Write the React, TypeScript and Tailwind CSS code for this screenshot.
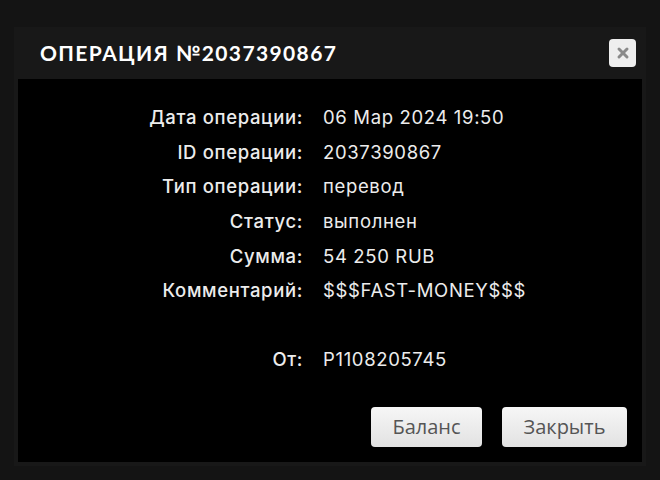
import { X } from 'lucide-react';

const rows = [
  { label: 'Дата операции:', value: '06 Мар 2024 19:50' },
  { label: 'ID операции:', value: '2037390867' },
  { label: 'Тип операции:', value: 'перевод' },
  { label: 'Статус:', value: 'выполнен' },
  { label: 'Сумма:', value: '54 250 RUB' },
  { label: 'Комментарий:', value: '$$$FAST-MONEY$$$' },
];

export default function App() {
  return (
    <div className="w-[660px] h-[480px] bg-[#141414] pt-[27px] px-[14px] overflow-hidden">
      <div className="bg-[#181818] px-1 pb-1">
        <div className="h-[52px] flex items-center justify-between pl-[22px] pr-[6px]">
          <h1
            className="text-white font-bold text-[21px] tracking-[0.065em]"
            style={{ fontFamily: 'Lato, "Noto Sans", sans-serif' }}
          >
            ОПЕРАЦИЯ №2037390867
          </h1>
          <button className="w-[27px] h-[28px] rounded bg-[#eeeeee] flex items-center justify-center">
            <X size={16} strokeWidth={4.5} className="text-[#8a8a8a]" />
          </button>
        </div>

        <div
          className="bg-black pt-[21px] pb-[15px] pr-[15px] text-[#ececec] text-[18.5px] tracking-[0.035em]"
          style={{ fontFamily: 'Inter, "Noto Sans", sans-serif' }}
        >
          <div className="grid grid-cols-[285px_1fr] gap-x-5">
            {rows.map((r) => (
              <div key={r.label} className="contents">
                <div className="text-right h-[34.7px] leading-[34.7px] font-medium">{r.label}</div>
                <div className="h-[34.7px] leading-[34.7px]">{r.value}</div>
              </div>
            ))}
            <div className="h-[34px]" />
            <div className="h-[34px]" />
            <div className="text-right h-[34px] leading-[34px] font-medium">От:</div>
            <div className="h-[34px] leading-[34px]">P1108205745</div>
          </div>

          <div
            className="flex justify-end gap-5 mt-[31px] tracking-normal"
            style={{ fontFamily: '"Open Sans", "Noto Sans", sans-serif' }}
          >
            <button className="w-[111px] h-10 rounded bg-gradient-to-b from-[#f6f6f6] to-[#e2e2e2] text-[#555] text-[20px]">
              Баланс
            </button>
            <button className="w-[125px] h-10 rounded bg-gradient-to-b from-[#f6f6f6] to-[#e2e2e2] text-[#555] text-[20px]">
              Закрыть
            </button>
          </div>
        </div>
      </div>
    </div>
  );
}
